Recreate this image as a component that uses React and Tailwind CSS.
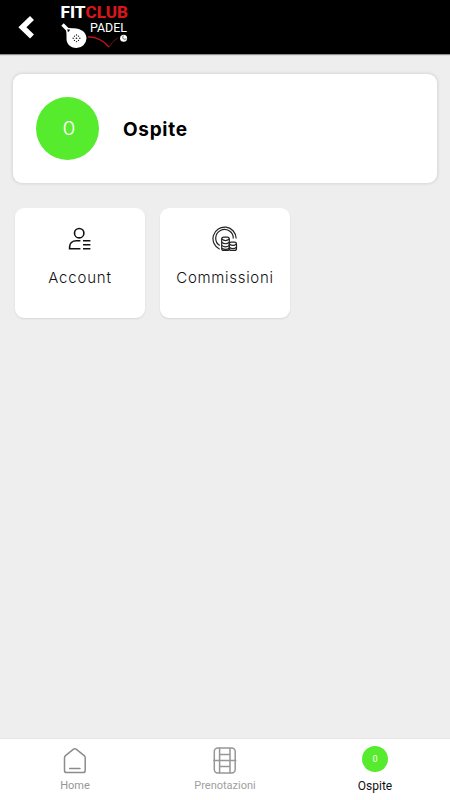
function Logo() {
  return (
    <svg width="72" height="46" viewBox="58 4 72 46" fill="none">
      <g fontFamily="Roboto, sans-serif">
        <text x="60.5" y="18.2" fontSize="15.8" fontWeight="800" fill="#fff" textLength="25" lengthAdjust="spacingAndGlyphs">
          FIT
        </text>
        <text x="85.5" y="18.2" fontSize="15.8" fontWeight="800" fill="#d8141c" textLength="42.5" lengthAdjust="spacingAndGlyphs">
          CLUB
        </text>
        <text x="90" y="32" fontSize="12.4" fill="#fff" textLength="37" lengthAdjust="spacingAndGlyphs">
          PADEL
        </text>
      </g>
      <path d="M62.5 24.5L67 29" stroke="#fff" strokeWidth="3.4" />
      <path d="M65 27.5L72 28.3C80 27.5 86.5 32 86.5 38.3A10 10 0 0 1 76.5 48C70 48 66.5 43.5 66.5 39C66.5 35 66.8 31 65 27.5Z" fill="#fff" />
      <path d="M67.3 29.3L70.3 29.8L68 32.3Z" fill="#000" />
      <g fill="#111">
        <circle cx="76.5" cy="38.3" r="0.8" />
        <circle cx="76.5" cy="35" r="0.7" />
        <circle cx="76.5" cy="41.6" r="0.7" />
        <circle cx="73.2" cy="38.3" r="0.7" />
        <circle cx="79.8" cy="38.3" r="0.7" />
        <circle cx="74.5" cy="36.2" r="0.6" />
        <circle cx="78.5" cy="36.2" r="0.6" />
        <circle cx="74.5" cy="40.4" r="0.6" />
        <circle cx="78.5" cy="40.4" r="0.6" />
      </g>
      <path d="M88 37C95 36.5 104 40.5 109 47" stroke="#b5151c" strokeWidth="1.4" />
      <path d="M109 47.5C111 43.5 113.5 40.5 118 38" stroke="#8d1217" strokeWidth="0.8" />
      <circle cx="123.6" cy="38.2" r="3.5" fill="#fff" />
      <path d="M123.3 35.5C122 38.5 123.5 40 126.5 38.8" stroke="#333" strokeWidth="0.8" />
    </svg>
  );
}

function AccountIcon() {
  return (
    <svg width="24" height="26" viewBox="68 226 24 26" fill="none" stroke="#111" strokeWidth="1.6">
      <circle cx="79.2" cy="233.2" r="4.7" />
      <path d="M80.4 240.7H76.5C72 240.7 69.6 243.6 69.6 247V248.7H80.4" />
      <path d="M83 240.7H90.4M83 244.7H90.4M83 248.7H90.4" />
    </svg>
  );
}

function CoinsIcon() {
  return (
    <svg width="26" height="26" viewBox="212 226 26 26" fill="none" stroke="#222" strokeWidth="1.2">
      <path d="M219.7 249.2A11.6 11.6 0 1 1 236.2 238.5" />
      <path d="M219.7 245.6A8.8 8.8 0 1 1 233.3 238.5" />
      <rect x="221.7" y="237.2" width="7.6" height="13.2" rx="2" />
      <path d="M221.7 239Q225.5 242.2 229.3 239M221.7 242.3Q225.5 245.2 229.3 242.3M221.7 245.4Q225.5 248.4 229.3 245.4M222 248.2Q225.5 250.4 229.3 248.2" />
      <rect x="229.3" y="242.2" width="7.2" height="8.2" rx="2" />
      <path d="M229.3 244Q233 246.8 236.5 244M229.3 247.2Q233 250.2 236.5 247.2" />
    </svg>
  );
}

function HomeIcon() {
  return (
    <svg width="26" height="28" viewBox="62 746 26 28" fill="none" stroke="#8c8c8c" strokeWidth="1.5" strokeLinecap="round" strokeLinejoin="round">
      <path d="M73.5 749.2Q74.8 748.2 76.1 749.2L84.2 755.6Q85.2 756.5 85.2 757.8V770.4Q85.2 772.6 83 772.6H66.7Q64.5 772.6 64.5 770.4V757.8Q64.5 756.5 65.5 755.6Z" />
      <path d="M69.7 768.5H80" />
    </svg>
  );
}

function CourtIcon() {
  return (
    <svg width="26" height="28" viewBox="212 746 26 28" fill="none" stroke="#969696" strokeWidth="1.5">
      <rect x="214.3" y="747.9" width="20.9" height="25.2" rx="3.5" />
      <path d="M219.6 747.9V773.1M230 747.9V773.1M213.3 760.4H236.3M219.6 754.4H230M219.6 766.4H230" />
    </svg>
  );
}

function Tile({ icon, label, labelClass }) {
  return (
    <div className="flex h-[110px] w-[130px] flex-col items-center rounded-[9px] bg-white pt-[18px] shadow-[0_1px_2px_rgba(0,0,0,0.1)]">
      {icon}
      <span className={`mt-4 leading-5 font-light text-[#111] ${labelClass}`}>{label}</span>
    </div>
  );
}

function NavItem({ icon, label, className }) {
  return (
    <button className={`flex flex-1 flex-col items-center pt-[7px] font-[Roboto,sans-serif] ${className}`}>
      <span className="flex h-7 items-center">{icon}</span>
      <span className="mt-[5px] leading-[14px]">{label}</span>
    </button>
  );
}

export default function App() {
  return (
    <div className="flex h-[800px] w-[450px] flex-col bg-[#eeeeee] font-[Inter,sans-serif]">
      <header className="flex h-[54px] items-start bg-black pt-1 pl-[18px] shadow-[0_1px_1px_rgba(0,0,0,0.4)]">
        <button className="mt-3 mr-[22px]" aria-label="Indietro">
          <svg width="18" height="23" viewBox="18 16 18 23" fill="none">
            <path d="M32 18L22.4 27.3L32 36.6" stroke="#fff" strokeWidth="5.6" />
          </svg>
        </button>
        <Logo />
      </header>

      <main className="flex-1 px-[13px] pt-5">
        <section className="flex h-[109px] items-center rounded-[9px] bg-white pl-[23px] shadow-[0_0_3px_1px_rgba(0,0,0,0.1)]">
          <div className="flex size-[63px] items-center justify-center rounded-full bg-[#57eb2e] text-[19px] text-white">
            <span className="scale-x-110 pt-px pl-0.5 font-light">0</span>
          </div>
          <h1 className="ml-6 pt-[3px] text-[19px] font-bold tracking-[0.7px] text-black">Ospite</h1>
        </section>

        <section className="mt-[25px] flex gap-[15px] pl-0.5">
          <Tile icon={<AccountIcon />} label="Account" labelClass="text-[15px] tracking-[0.8px]" />
          <Tile icon={<CoinsIcon />} label="Commissioni" labelClass="text-[15px] tracking-[0.7px]" />
        </section>
      </main>

      <nav className="flex h-[62px] border-t border-[#e5e5e5] bg-white">
        <NavItem icon={<HomeIcon />} label="Home" className="text-[11px] text-[#969696]" />
        <NavItem icon={<CourtIcon />} label="Prenotazioni" className="text-[11px] text-[#a0a0a0]" />
        <NavItem
          icon={
            <span className="mb-0.5 flex size-[26px] items-center justify-center rounded-full bg-[#57eb2e] pt-px text-[9px] text-white">
              0
            </span>
          }
          label="Ospite"
          className="text-[12px] text-[#111]"
        />
      </nav>
    </div>
  );
}
